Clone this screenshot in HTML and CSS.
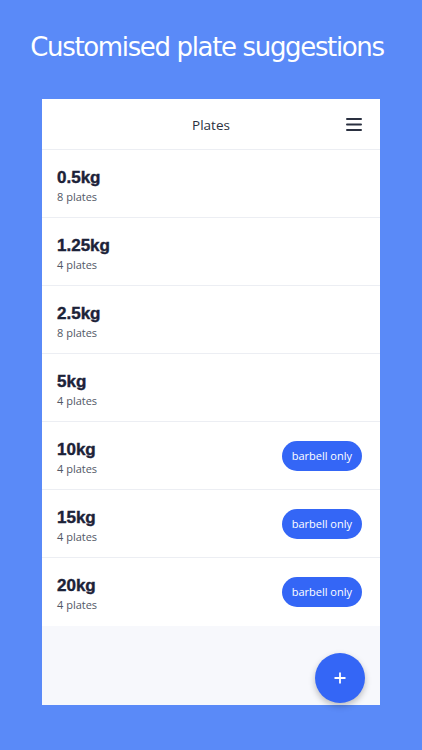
FILE: index.html
```html
<!DOCTYPE html>
<html lang="en">
<head>
    <meta charset="UTF-8">
    <meta name="viewport" content="width=device-width, initial-scale=1.0">
    <title>Customised plate suggestions</title>
    <link rel="stylesheet" href="styles.css">
</head>
<body>
    <h1 class="headline">Customised plate suggestions</h1>
    <main class="phone">
        <header class="topbar">
            <span class="topbar-title">Plates</span>
            <svg class="menu" width="16" height="13" viewBox="0 0 16 13">
                <rect x="0" y="0" width="16" height="2" rx="1"/>
                <rect x="0" y="5.5" width="16" height="2" rx="1"/>
                <rect x="0" y="11" width="16" height="2" rx="1"/>
            </svg>
        </header>
        <ul class="plates">
            <li class="plate">
                <div><div class="weight">0.5kg</div><div class="count">8 plates</div></div>
            </li>
            <li class="plate">
                <div><div class="weight">1.25kg</div><div class="count">4 plates</div></div>
            </li>
            <li class="plate">
                <div><div class="weight">2.5kg</div><div class="count">8 plates</div></div>
            </li>
            <li class="plate">
                <div><div class="weight">5kg</div><div class="count">4 plates</div></div>
            </li>
            <li class="plate">
                <div><div class="weight">10kg</div><div class="count">4 plates</div></div>
                <span class="badge">barbell only</span>
            </li>
            <li class="plate">
                <div><div class="weight">15kg</div><div class="count">4 plates</div></div>
                <span class="badge">barbell only</span>
            </li>
            <li class="plate">
                <div><div class="weight">20kg</div><div class="count">4 plates</div></div>
                <span class="badge">barbell only</span>
            </li>
        </ul>
        <div class="footer-space">
            <button class="fab">
                <svg width="12" height="12" viewBox="0 0 12 12">
                    <path d="M6 0.5V11.5M0.5 6H11.5" stroke="#fff" stroke-width="1.8"/>
                </svg>
            </button>
        </div>
    </main>
</body>
</html>
```

FILE: styles.css
```css
body {
    margin: 0;
    background: #5a8af8;
    font-family: "Open Sans", "DejaVu Sans", sans-serif;
    height: 750px;
    overflow: hidden;
}

.headline {
    margin: 0;
    padding: 31px 8px 0 0;
    height: 69px;
    box-sizing: border-box;
    text-align: center;
    color: #fff;
    font-family: "DejaVu Sans", sans-serif;
    font-weight: normal;
    font-size: 26px;
    line-height: 32px;
    letter-spacing: -1.35px;
}

.phone {
    margin: 30px 0 0 42px;
    width: 338px;
    height: 606px;
    background: #f7f8fc;
    display: flex;
    flex-direction: column;
}

.topbar {
    height: 51px;
    box-sizing: border-box;
    background: #fff;
    border-bottom: 1px solid #eceef3;
    display: flex;
    align-items: center;
    justify-content: center;
    position: relative;
}

.topbar-title {
    font-size: 13.5px;
    color: #2a3040;
    padding-top: 2px;
}

.menu {
    position: absolute;
    right: 18px;
    top: 19px;
    fill: #2a3040;
}

.plates {
    list-style: none;
    margin: 0;
    padding: 0;
}

.plate {
    height: 68px;
    box-sizing: border-box;
    padding: 5px 18px 0 15px;
    background: #fff;
    border-bottom: 1px solid #eceef3;
    display: flex;
    align-items: center;
    justify-content: space-between;
}

.plate:last-child {
    border-bottom: none;
}

.weight {
    font-family: "Liberation Sans", sans-serif;
    font-weight: bold;
    font-size: 17px;
    color: #1c2238;
    line-height: 20px;
    -webkit-text-stroke: 0.4px #1c2238;
}

.count {
    font-size: 11px;
    color: #525766;
    line-height: 17px;
}

.badge {
    background: #3466f6;
    color: #fff;
    font-size: 11px;
    height: 30px;
    line-height: 30px;
    padding: 0 10px;
    border-radius: 15px;
    margin-top: -5px;
}

.footer-space {
    flex: 1;
    position: relative;
}

.fab {
    position: absolute;
    right: 15px;
    bottom: 2px;
    width: 50px;
    height: 50px;
    border: none;
    border-radius: 50%;
    background: #3466f6;
    padding: 0;
    display: flex;
    align-items: center;
    justify-content: center;
    box-shadow: 0 3px 6px rgba(0, 0, 0, 0.25);
}
```
